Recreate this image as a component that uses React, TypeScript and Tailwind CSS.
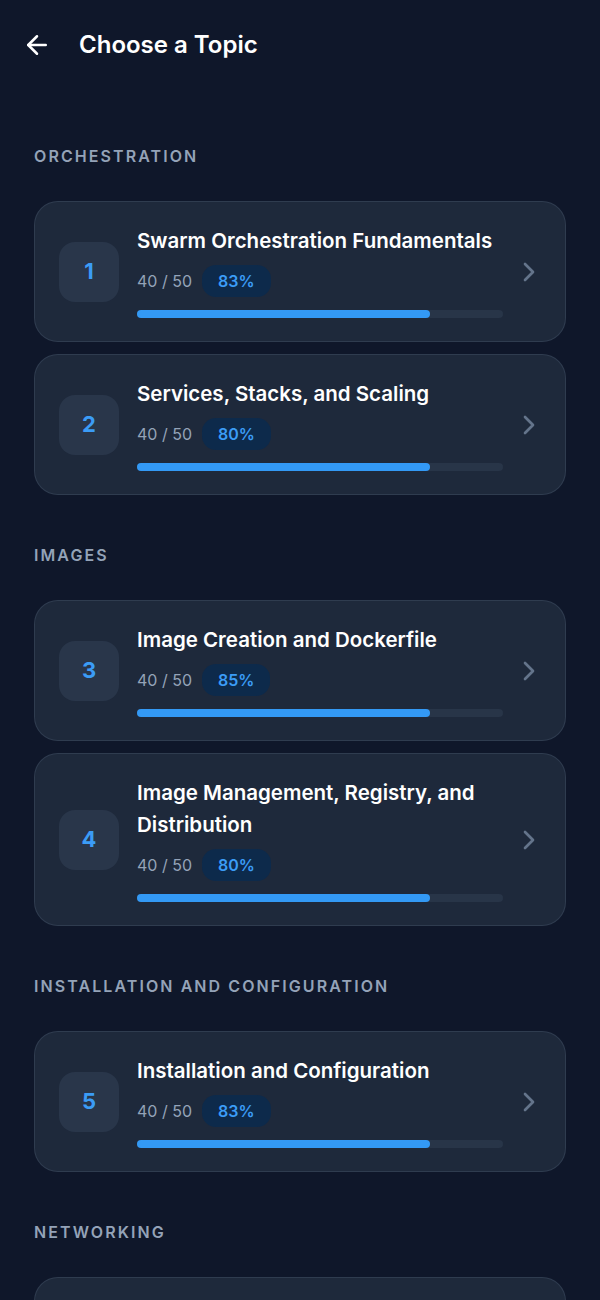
import React from 'react';
import { ArrowLeft, ChevronRight } from 'lucide-react';

type Topic = { n: number; title: string; done: number; total: number; pct: number };

const sections: { label: string; topics: Topic[] }[] = [
  {
    label: 'Orchestration',
    topics: [
      { n: 1, title: 'Swarm Orchestration Fundamentals', done: 40, total: 50, pct: 83 },
      { n: 2, title: 'Services, Stacks, and Scaling', done: 40, total: 50, pct: 80 },
    ],
  },
  {
    label: 'Images',
    topics: [
      { n: 3, title: 'Image Creation and Dockerfile', done: 40, total: 50, pct: 85 },
      { n: 4, title: 'Image Management, Registry, and Distribution', done: 40, total: 50, pct: 80 },
    ],
  },
  {
    label: 'Installation and Configuration',
    topics: [{ n: 5, title: 'Installation and Configuration', done: 40, total: 50, pct: 83 }],
  },
  {
    label: 'Networking',
    topics: [{ n: 6, title: 'Docker Networking', done: 40, total: 50, pct: 80 }],
  },
];

const TopicCard = ({ t }: { t: Topic }) => {
  const fill = (t.done / t.total) * 100;
  return (
    <div className="flex items-center rounded-3xl border border-[#334155]/80 bg-[#1e293b] pl-6 pr-5 pt-[23px] pb-[23px]">
      <div className="flex h-[60px] w-[60px] shrink-0 items-center justify-center rounded-2xl bg-[#29364a] text-[22px] font-bold text-[#3b9cf6]">
        {t.n}
      </div>
      <div className="ml-[18px] min-w-0 flex-1">
        <div className="text-[20.5px] font-semibold leading-8 text-white">{t.title}</div>
        <div className="mt-2 flex h-8 items-center">
          <span className="text-[16px] text-[#94a3b8]">
            {t.done} / {t.total}
          </span>
          <span className="ml-2.5 flex h-8 items-center rounded-[14px] bg-[#0d2a4b] px-4 text-[16px] font-semibold text-[#3b9cf6]">
            {t.pct}%
          </span>
        </div>
        <div className="mt-[13px] h-2 w-full rounded-full bg-[#283548]">
          <div className="h-2 rounded-full bg-[#3399f5]" style={{ width: `${fill}%` }} />
        </div>
      </div>
      <ChevronRight size={32} strokeWidth={2} className="ml-2.5 shrink-0 text-[#64748b]" />
    </div>
  );
};

export default function App() {
  return (
    <div className="min-h-[1300px] bg-[#0f172a]" style={{ fontFamily: 'Inter, "Noto Sans", sans-serif' }}>
      <header className="flex h-[90px] items-center px-[22px]">
        <ArrowLeft size={30} strokeWidth={2} className="text-white" />
        <h1 className="ml-[27px] text-[24px] font-semibold text-white">Choose a Topic</h1>
      </header>
      <main className="px-[34px] pt-[54px]">
        {sections.map((s, i) => (
          <section key={s.label} className={i === 0 ? '' : 'mt-[48px]'}>
            <h2 className="mb-[33px] text-[16px] font-semibold uppercase leading-6 tracking-[0.13em] text-[#94a3b8]">
              {s.label}
            </h2>
            <div className="flex flex-col gap-3">
              {s.topics.map((t) => (
                <TopicCard key={t.n} t={t} />
              ))}
            </div>
          </section>
        ))}
      </main>
    </div>
  );
}
